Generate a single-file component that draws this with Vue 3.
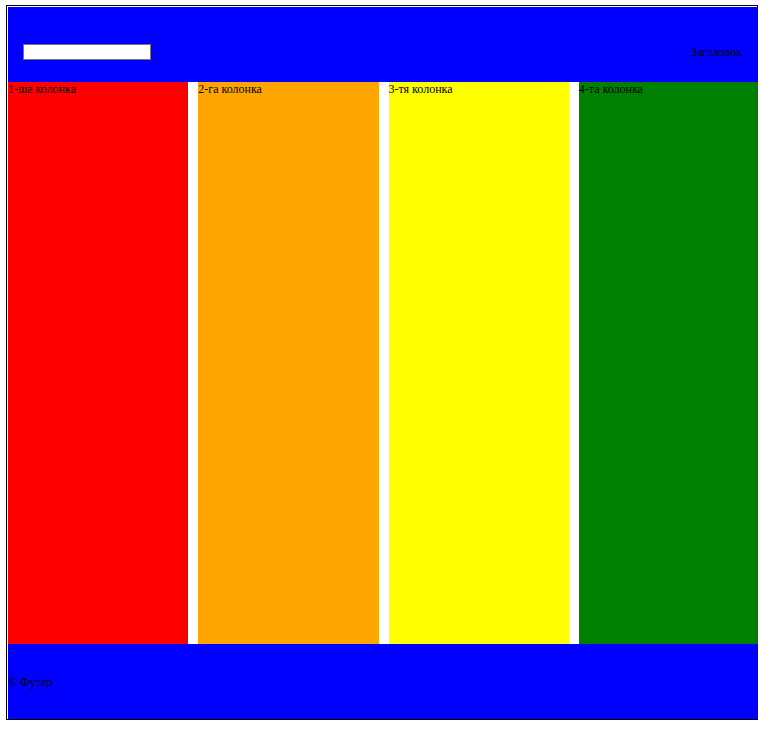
<script setup>
const columns = [
  { name: 'red', text: '1-ша колонка' },
  { name: 'orange', text: '2-га колонка' },
  { name: 'yellow', text: '3-тя колонка' },
  { name: 'green', text: '4-та колонка' },
]
</script>

<template>
  <div class="page">
    <div class="content">
      <header class="header">
        <input class="search" type="text" aria-label="Заголовок" />
        <span>Заголовок</span>
      </header>
      <main class="columns">
        <section v-for="column in columns" :key="column.name" :class="column.name">
          {{ column.text }}
        </section>
      </main>
      <footer class="footer">© Футер</footer>
    </div>
  </div>
</template>

<style>
body {
  background: #fff;
}
</style>

<style scoped>
.page {
  margin: 5px 23px 0 6px;
  border: 1px solid #000;
  padding: 1px 0 0 1px;
  font: 12px/14px "Liberation Serif", "Times New Roman", serif;
  color: #000;
}

/* The content covers the right-hand border. */
.content {
  margin-right: -1px;
  overflow: hidden;
}

.header,
.footer {
  display: flex;
  align-items: center;
  box-sizing: border-box;
  height: 75px;
  background: #00f;
}

.header {
  justify-content: space-between;
  padding: 15px 16px 0 15px;
}

.search {
  box-sizing: border-box;
  width: 128px;
  height: 16px;
  margin: 0;
  border: 1px solid #767676;
  border-radius: 0;
  padding: 0 1px;
  background: #fff;
  font: inherit;
}

.columns {
  display: grid;
  grid-template-columns: repeat(4, 1fr);
  column-gap: 10px;
  margin-right: -1px;
  min-height: calc(100vh - 180px);
}

.red {
  background: red;
}

.orange {
  background: orange;
}

.yellow {
  background: yellow;
}

.green {
  background: green;
}
</style>
